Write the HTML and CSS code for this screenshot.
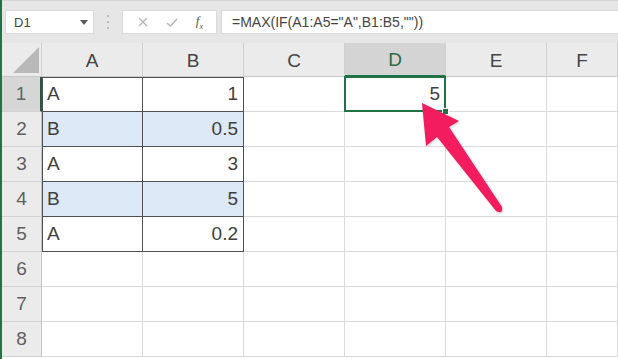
FILE: index.html
```html
<!DOCTYPE html>
<html lang="ja">
<head>
  <meta charset="UTF-8">
  <meta name="viewport" content="width=device-width, initial-scale=1.0">
  <title>MAX IF</title>
  <link rel="stylesheet" href="styles.css">
</head>

<body>
  <div class="app">
    <!-- 名前ボックスと数式バー -->
    <div class="toolbar">
      <div class="namebox">
        <span>D1</span>
        <svg class="dd" width="8" height="5" viewBox="0 0 8 5"><path d="M0 0 L8 0 L4 5 Z" fill="#5a5a5a"/></svg>
      </div>
      <div class="grip">
        <svg width="4" height="16" viewBox="0 0 4 16">
          <circle cx="2" cy="2" r="1" fill="#b0b0b0"/>
          <circle cx="2" cy="8" r="1" fill="#b0b0b0"/>
          <circle cx="2" cy="14" r="1" fill="#b0b0b0"/>
        </svg>
      </div>
      <div class="fxbtns">
        <svg width="10" height="10" viewBox="0 0 10 10"><path d="M1 1 L9 9 M9 1 L1 9" stroke="#b5b5b5" stroke-width="1.3"/></svg>
        <svg width="12" height="9" viewBox="0 0 12 9"><path d="M1 5 L4.5 8 L11 1" stroke="#b5b5b5" stroke-width="1.4" fill="none"/></svg>
        <span class="fx"><i>f</i><sub>x</sub></span>
      </div>
      <div class="formula">=MAX(IF(A1:A5="A",B1:B5,""))</div>
    </div>

    <!-- シート -->
    <div class="sheet">
      <div class="corner"><svg width="26" height="26" viewBox="0 0 26 26"><path d="M26 0 L26 26 L0 26 Z" fill="#b9b9b9"/></svg></div>
      <div class="ch">A</div>
      <div class="ch">B</div>
      <div class="ch">C</div>
      <div class="ch sel">D</div>
      <div class="ch">E</div>
      <div class="ch">F</div>

      <div class="rh sel">1</div>
      <div class="c t ta tt">A</div>
      <div class="c t num tt">1</div>
      <div class="c"></div>
      <div class="c num active">5</div>
      <div class="c"></div>
      <div class="c"></div>

      <div class="rh">2</div>
      <div class="c t ta blue">B</div>
      <div class="c t num blue">0.5</div>
      <div class="c"></div>
      <div class="c"></div>
      <div class="c"></div>
      <div class="c"></div>

      <div class="rh">3</div>
      <div class="c t ta">A</div>
      <div class="c t num">3</div>
      <div class="c"></div>
      <div class="c"></div>
      <div class="c"></div>
      <div class="c"></div>

      <div class="rh">4</div>
      <div class="c t ta blue">B</div>
      <div class="c t num blue">5</div>
      <div class="c"></div>
      <div class="c"></div>
      <div class="c"></div>
      <div class="c"></div>

      <div class="rh">5</div>
      <div class="c t ta">A</div>
      <div class="c t num">0.2</div>
      <div class="c"></div>
      <div class="c"></div>
      <div class="c"></div>
      <div class="c"></div>

      <div class="rh">6</div>
      <div class="c"></div><div class="c"></div><div class="c"></div><div class="c"></div><div class="c"></div><div class="c"></div>

      <div class="rh">7</div>
      <div class="c"></div><div class="c"></div><div class="c"></div><div class="c"></div><div class="c"></div><div class="c"></div>

      <div class="rh">8</div>
      <div class="c"></div><div class="c"></div><div class="c"></div><div class="c"></div><div class="c"></div><div class="c"></div>
    </div>

    <!-- 矢印 -->
    <svg class="arrow" width="618" height="359" viewBox="0 0 618 359">
      <path d="M422 103 L459 121 L449 127 L502 207 Q503 215 496 211 L437 137 L426 146 Z" fill="#f21c5f"/>
    </svg>
  </div>
</body>
</html>
```

FILE: styles.css
```css
body {
  margin: 0;
  font-family: "Liberation Sans", Arial, sans-serif;
  background-color: #ffffff;
}
.app {
  position: relative;
  width: 618px;
  height: 359px;
  overflow: hidden;
  border-left: 2px solid #217346; /* Excelの緑の枠 */
  box-sizing: border-box;
}

/* 名前ボックス・数式バー */
.toolbar {
  display: flex;
  align-items: center;
  height: 43px;
  padding: 0 0 0 3px;
  background-color: #e6e6e6;
  border-top: 1px solid #d6d6d6;
  box-sizing: border-box;
}
.namebox {
  display: flex;
  align-items: center;
  justify-content: space-between;
  width: 89px;
  height: 24px;
  padding: 0 5px 0 8px;
  background-color: #fff;
  border: 1px solid #dadada;
  box-sizing: border-box;
  font-size: 13px;
  color: #444;
}
.grip {
  display: flex;
  justify-content: center;
  width: 28px;
}
.fxbtns {
  display: flex;
  align-items: center;
  justify-content: space-around;
  width: 95px;
  height: 24px;
  padding: 0 4px 0 6px;
  background-color: #fff;
  border: 1px solid #dadada;
  box-sizing: border-box;
}
.fx {
  font-family: "Liberation Serif", serif;
  font-size: 13px;
  color: #555;
}
.fx sub {
  font-size: 8px;
  font-style: italic;
}
.formula {
  flex: 1;
  height: 24px;
  margin-left: 4px;
  padding-left: 10px;
  background-color: #fff;
  border: 1px solid #dadada;
  border-right: none;
  box-sizing: border-box;
  font-size: 14px;
  line-height: 22px;
  color: #444;
  white-space: nowrap;
}

/* シート */
.sheet {
  display: grid;
  grid-template-columns: 40px repeat(5, 101px) 1fr;
  grid-template-rows: 34px;
  grid-auto-rows: 35px;
}
.sheet > div {
  box-sizing: border-box;
  display: flex;
  align-items: center;
}
.corner {
  background-color: #ebebeb;
  border-right: 1px solid #cfcfcf;
  border-bottom: 1px solid #c8c8c8;
  justify-content: flex-end;
  align-items: flex-end !important;
  padding: 0 2px 3px 0;
}
.ch {
  justify-content: center;
  padding-top: 2px;
  background-color: #ebebeb;
  border-right: 1px solid #d0d0d0;
  border-bottom: 1px solid #c8c8c8;
  font-size: 19px;
  color: #444;
}
.ch.sel {
  background-color: #d4d4d4;
  color: #2f6b48;
  border-bottom: 2px solid #217346;
}
.rh {
  justify-content: center;
  background-color: #ebebeb;
  border-right: 1px solid #c6c6c6;
  border-bottom: 1px solid #d2d2d2;
  font-size: 19px;
  color: #606060;
}
.rh.sel {
  background-color: #d6d6d6;
  color: #5a6a60;
  border-right: 2px solid #2a5a3e;
}
.c {
  padding: 0 5px;
  border-right: 1px solid #dadada;
  border-bottom: 1px solid #dadada;
  font-size: 19px;
  color: #404040;
}
.num {
  justify-content: flex-end;
}
.t {
  border-right-color: #505050;
  border-bottom-color: #505050;
}
.ta {
  box-shadow: inset 1px 0 0 #505050;
}
.tt {
  box-shadow: inset 0 1px 0 #505050;
}
.ta.tt {
  box-shadow: inset 1px 1px 0 #505050;
}
.blue {
  background-color: #dde9f6;
}
.active {
  position: relative;
}
.active::before {
  content: "";
  position: absolute;
  left: -1px;
  top: -1px;
  right: -1px;
  bottom: -1px;
  border: 2px solid #217346;
}
.active::after {
  content: "";
  position: absolute;
  right: -4px;
  bottom: -4px;
  width: 5px;
  height: 5px;
  background-color: #217346;
  border: 1px solid #fff;
}

/* 矢印 */
.arrow {
  position: absolute;
  left: -2px;
  top: 0;
  pointer-events: none;
  filter: drop-shadow(1px 1px 1px rgba(0, 0, 0, 0.2));
}
```
